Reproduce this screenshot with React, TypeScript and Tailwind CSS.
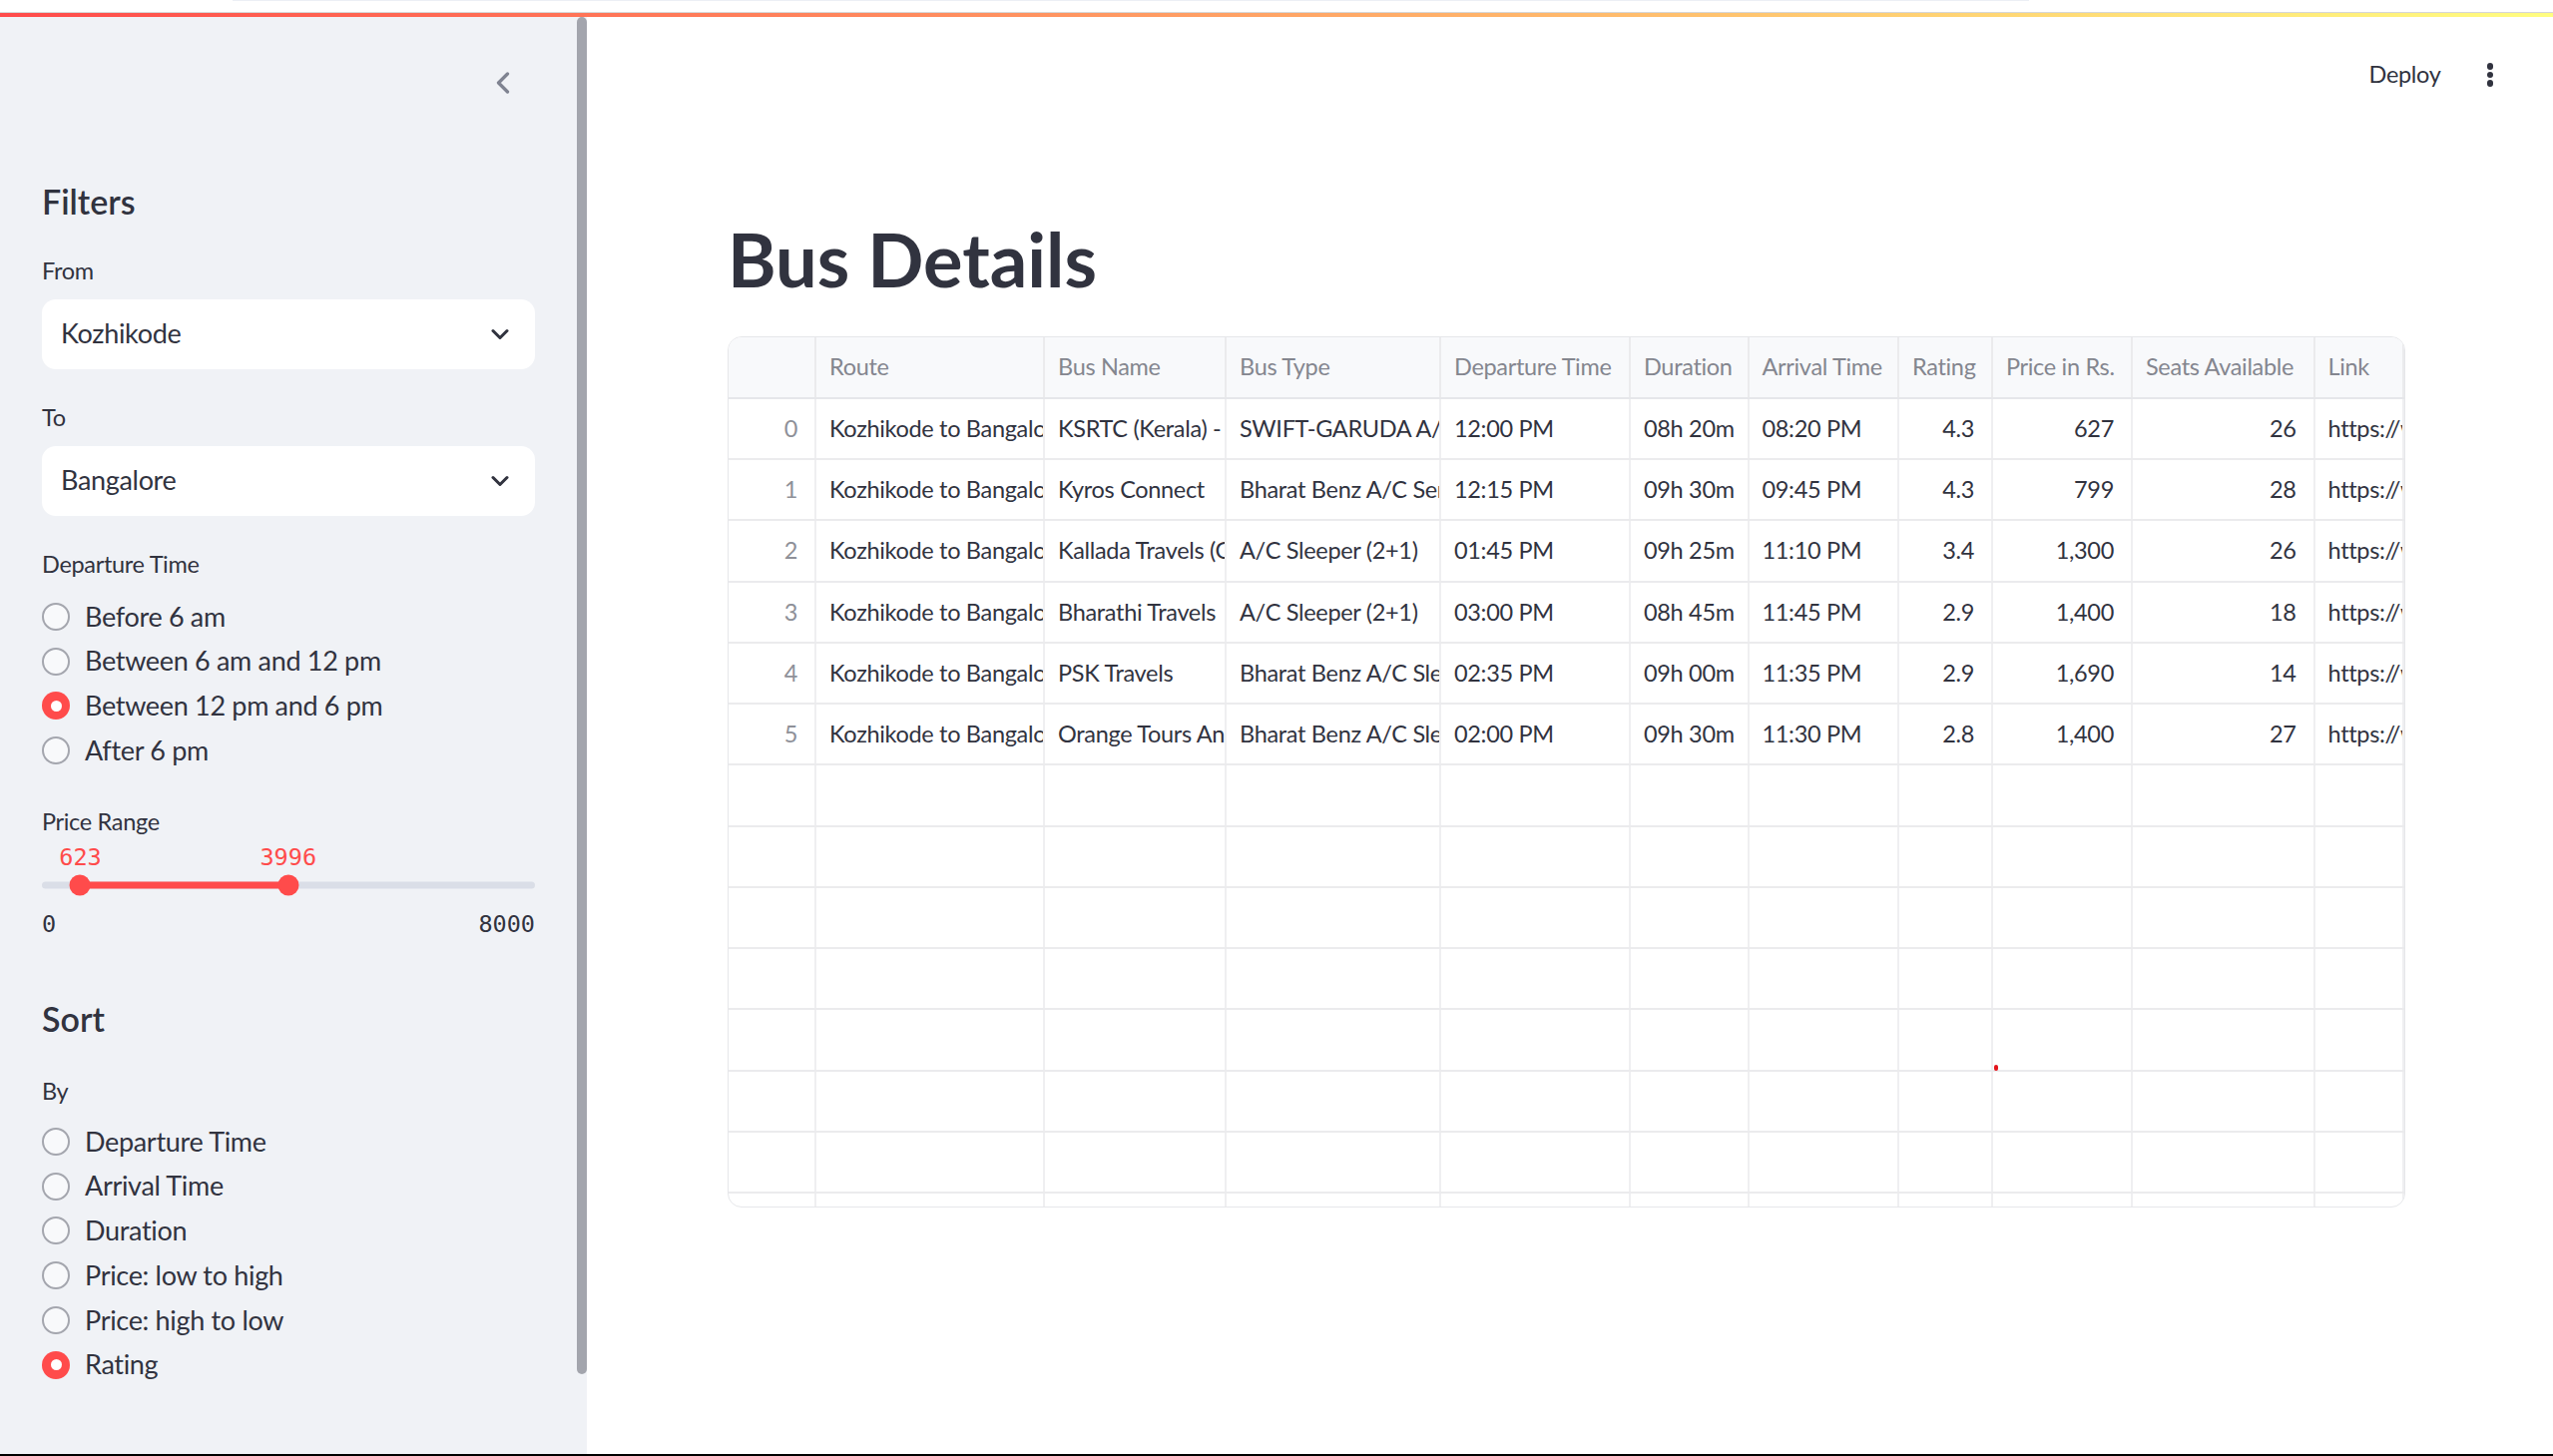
import React from "react";
import { ChevronDown, ChevronLeft } from "lucide-react";

type Col = { name: string; w: string; right?: boolean; index?: boolean };

const COLS: Col[] = [
  { name: "", w: "w-[88px]", right: true, index: true },
  { name: "Route", w: "w-[229px]" },
  { name: "Bus Name", w: "w-[182px]" },
  { name: "Bus Type", w: "w-[215px]" },
  { name: "Departure Time", w: "w-[190px]" },
  { name: "Duration", w: "w-[118.5px]" },
  { name: "Arrival Time", w: "w-[150.5px]" },
  { name: "Rating", w: "w-[94px]", right: true },
  { name: "Price in Rs.", w: "w-[140px]", right: true },
  { name: "Seats Available", w: "w-[182.5px]", right: true },
  { name: "Link", w: "flex-1" },
];

const ROWS: string[][] = [
  ["0", "Kozhikode to Bangalore", "KSRTC (Kerala) - Kozhikode", "SWIFT-GARUDA A/C SEATER", "12:00 PM", "08h 20m", "08:20 PM", "4.3", "627", "26", "https://www.redbus.in/bus-tickets/kozhikode-to-bangalore"],
  ["1", "Kozhikode to Bangalore", "Kyros Connect", "Bharat Benz A/C Semi Sleeper (2+2)", "12:15 PM", "09h 30m", "09:45 PM", "4.3", "799", "28", "https://www.redbus.in/bus-tickets/kozhikode-to-bangalore"],
  ["2", "Kozhikode to Bangalore", "Kallada Travels (G4)", "A/C Sleeper (2+1)", "01:45 PM", "09h 25m", "11:10 PM", "3.4", "1,300", "26", "https://www.redbus.in/bus-tickets/kozhikode-to-bangalore"],
  ["3", "Kozhikode to Bangalore", "Bharathi Travels", "A/C Sleeper (2+1)", "03:00 PM", "08h 45m", "11:45 PM", "2.9", "1,400", "18", "https://www.redbus.in/bus-tickets/kozhikode-to-bangalore"],
  ["4", "Kozhikode to Bangalore", "PSK Travels", "Bharat Benz A/C Sleeper (2+1)", "02:35 PM", "09h 00m", "11:35 PM", "2.9", "1,690", "14", "https://www.redbus.in/bus-tickets/kozhikode-to-bangalore"],
  ["5", "Kozhikode to Bangalore", "Orange Tours And Travels", "Bharat Benz A/C Sleeper (2+1)", "02:00 PM", "09h 30m", "11:30 PM", "2.8", "1,400", "27", "https://www.redbus.in/bus-tickets/kozhikode-to-bangalore"],
];

function Radio({ label, checked }: { label: string; checked?: boolean }) {
  return (
    <div className="flex h-[44.75px] items-center">
      {checked ? (
        <div className="flex h-[28px] w-[28px] shrink-0 items-center justify-center rounded-full bg-[#ff4b4b]">
          <div className="h-[11px] w-[11px] rounded-full bg-white" />
        </div>
      ) : (
        <div className="h-[28px] w-[28px] shrink-0 rounded-full border-2 border-[#a4a6ae] bg-[#f8f9fb]" />
      )}
      <span className="ml-[15px] whitespace-nowrap text-[27px] text-[#31333f]">{label}</span>
    </div>
  );
}

function Select({ value }: { value: string }) {
  return (
    <div className="flex h-[70px] items-center justify-between rounded-[14px] bg-white pl-[19px] pr-[21px]">
      <span className="pb-[2px] text-[27px] text-[#31333f]">{value}</span>
      <ChevronDown size={28} strokeWidth={2.6} color="#31333f" />
    </div>
  );
}

function Label({ text, mt }: { text: string; mt: string }) {
  return <div className={`${mt} h-[30px] text-[23.5px] leading-[30px] text-[#31333f]`}>{text}</div>;
}

function Slider() {
  const max = 8000;
  const lo = 623;
  const hi = 3996;
  const pLo = (lo / max) * 100;
  const pHi = (hi / max) * 100;
  return (
    <div>
      <div className="relative mt-[7px] h-[28px] font-['DejaVu_Sans_Mono',monospace] text-[23.5px] leading-[28px] tracking-normal text-[#ff4b4b]">
        <span className="absolute top-0 -translate-x-1/2" style={{ left: `${pLo}%` }}>
          {lo}
        </span>
        <span className="absolute top-0 -translate-x-1/2" style={{ left: `${pHi}%` }}>
          {hi}
        </span>
      </div>
      <div className="relative h-[28px]">
        <div className="absolute left-0 right-0 top-1/2 h-[7px] -translate-y-1/2 rounded-full bg-[#dadee7]" />
        <div
          className="absolute top-1/2 h-[7px] -translate-y-1/2 bg-[#ff4b4b]"
          style={{ left: `${pLo}%`, width: `${pHi - pLo}%` }}
        />
        <div
          className="absolute top-1/2 h-[21px] w-[21px] -translate-x-1/2 -translate-y-1/2 rounded-full bg-[#ff4b4b]"
          style={{ left: `${pLo}%` }}
        />
        <div
          className="absolute top-1/2 h-[21px] w-[21px] -translate-x-1/2 -translate-y-1/2 rounded-full bg-[#ff4b4b]"
          style={{ left: `${pHi}%` }}
        />
      </div>
      <div className="mt-[11.5px] flex h-[28px] justify-between font-['DejaVu_Sans_Mono',monospace] text-[23.5px] leading-[28px] tracking-normal text-[#31333f]">
        <span>0</span>
        <span>8000</span>
      </div>
    </div>
  );
}

function Sidebar() {
  return (
    <div className="relative h-full w-[588px] shrink-0 bg-[#f0f2f6]">
      <div className="pl-[42px] pr-[52px]">
        <div className="flex h-[132px] items-center justify-end pr-[14px]">
          <ChevronLeft size={36} strokeWidth={2.2} color="#7f8391" />
        </div>
        <div className="mt-[29px] h-[48px] text-[34px] font-semibold leading-[48px] tracking-normal text-[#31333f]">Filters</div>
        <Label text="From" mt="mt-[30px]" />
        <div className="mt-[14px]">
          <Select value="Kozhikode" />
        </div>
        <Label text="To" mt="mt-[33px]" />
        <div className="mt-[14px]">
          <Select value="Bangalore" />
        </div>
        <Label text="Departure Time" mt="mt-[33px]" />
        <div className="mt-[15.5px]">
          <Radio label="Before 6 am" />
          <Radio label="Between 6 am and 12 pm" />
          <Radio label="Between 12 pm and 6 pm" checked />
          <Radio label="After 6 pm" />
        </div>
        <Label text="Price Range" mt="mt-[33px]" />
        <Slider />
        <div className="mt-[57px] h-[48px] text-[34px] font-semibold leading-[48px] tracking-normal text-[#31333f]">Sort</div>
        <Label text="By" mt="mt-[32.5px]" />
        <div className="mt-[14px]">
          <Radio label="Departure Time" />
          <Radio label="Arrival Time" />
          <Radio label="Duration" />
          <Radio label="Price: low to high" />
          <Radio label="Price: high to low" />
          <Radio label="Rating" checked />
        </div>
      </div>
      <div className="absolute right-0 top-0 h-[1360px] w-[10px] rounded-full bg-[#a3a5ad]" />
    </div>
  );
}

function Table() {
  const empty = Array.from({ length: 8 }, () => COLS.map(() => ""));
  return (
    <div className="h-[873px] w-[1681px] overflow-hidden rounded-[14px] border border-[#e6e7ea] bg-white">
      <div className="flex h-[62px] border-b-2 border-[#e6e7ea] bg-[#f8f9fb]">
        {COLS.map((c, i) => (
          <div
            key={i}
            className={`${c.w} flex shrink-0 items-center overflow-hidden whitespace-nowrap border-r-2 border-[#ebebed] pl-[13px] text-[23.5px] text-[#84868f]`}
          >
            {c.name}
          </div>
        ))}
      </div>
      {[...ROWS, ...empty].map((r, ri) => (
        <div key={ri} className="flex h-[61.25px] border-b-2 border-[#ebebed]">
          {COLS.map((c, ci) => (
            <div
              key={ci}
              className={`${c.w} flex shrink-0 items-center overflow-hidden whitespace-nowrap border-r-2 border-[#efeff1] text-[23.5px] ${
                c.right ? "justify-end pr-[17px]" : "pl-[13px]"
              } ${c.index ? "text-[#8e9098]" : "text-[#31333f]"}`}
            >
              {r[ci]}
            </div>
          ))}
        </div>
      ))}
    </div>
  );
}

function Main() {
  return (
    <div className="relative h-full flex-1 bg-white">
      <div className="flex h-[116px] items-center justify-end pr-[60px]">
        <span className="text-[23.5px] text-[#31333f]">Deploy</span>
        <div className="ml-[46px] flex flex-col gap-[2px]">
          <div className="h-[6.5px] w-[6.5px] rounded-full bg-[#31333f]" />
          <div className="h-[6.5px] w-[6.5px] rounded-full bg-[#31333f]" />
          <div className="h-[6.5px] w-[6.5px] rounded-full bg-[#31333f]" />
        </div>
      </div>
      <div className="pl-[141px]">
        <h1 className="mt-[83px] text-[74px] font-bold leading-[1.2] tracking-normal text-[#31333f]">Bus Details</h1>
        <div className="mt-[32px]">
          <Table />
        </div>
      </div>
      <div className="absolute left-[1410px] top-[1050px] h-[6px] w-[4px] rounded-full bg-[#e3141b]" />
    </div>
  );
}

export default function App() {
  return (
    <div className="relative flex h-[1459px] w-[2558px] flex-col overflow-hidden bg-white font-['Lato','Noto_Sans',sans-serif] tracking-[-0.02em]">
      <div className="h-[12px] bg-white">
        <div className="ml-[233px] h-[1px] w-[1800px] bg-[#eceff5]" />
      </div>
      <div className="h-[1px] bg-[#d6d6d6]" />
      <div className="h-[4px] bg-[linear-gradient(90deg,#ff4b4b,#fffd80)]" />
      <div className="flex h-[1440px]">
        <Sidebar />
        <Main />
      </div>
      <div className="h-[2px] bg-black" />
    </div>
  );
}
